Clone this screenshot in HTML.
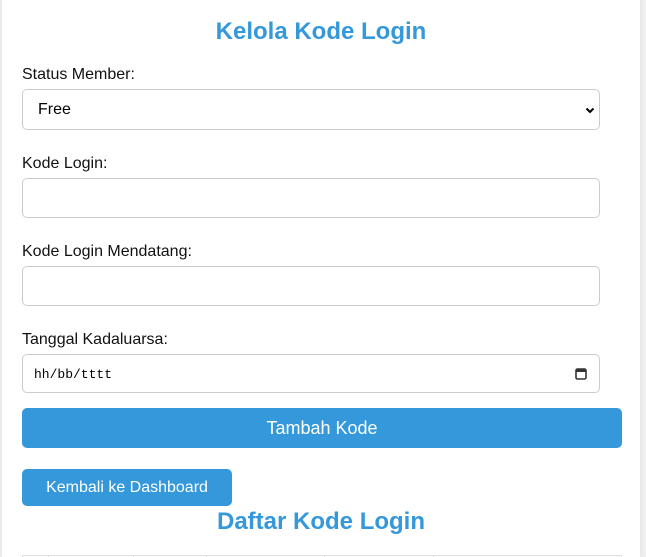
<!DOCTYPE html>
<html style="height:557px;overflow:hidden"><head><style>
body{margin:0;background:#f0f0f0;font-family:"Liberation Sans",Arial,sans-serif;width:646px;height:557px;overflow:hidden;position:relative}
.card{position:absolute;left:2px;top:-10px;width:638px;height:567px;background:#fff;border-radius:10px 10px 0 0;box-shadow:0 0 6px rgba(0,0,0,.08)}
.a{position:absolute}
h2{position:absolute;left:0;width:642px;text-align:center;margin:0;color:#3498db;font-size:24px;font-weight:bold}
.lbl{position:absolute;left:22px;font-size:16px;color:#111}
.in{position:absolute;left:22px;width:576px;border:1px solid #ccc;border-radius:5px;background:#fff}
.btn{position:absolute;background:#3498db;color:#fff;border-radius:5px;text-align:center;font-size:18px}
.v{position:absolute;top:555px;width:1px;height:2px;background:#ddd}
</style></head><body>
<div class="card"></div>
<h2 style="top:18px">Kelola Kode Login</h2>
<div class="lbl" style="top:66px">Status Member:</div>
<div class="in" style="top:89px;height:39px"><span class="a" style="left:15px;top:11px;font-size:16px">Free</span>
<svg class="a" style="left:562px;top:15px" width="10" height="10" viewBox="0 0 10 10"><path d="M1.5 3.5L5 7L8.5 3.5" stroke="#000" stroke-width="2" fill="none"/></svg></div>
<div class="lbl" style="top:155px">Kode Login:</div>
<div class="in" style="top:178px;height:38px"></div>
<div class="lbl" style="top:243px">Kode Login Mendatang:</div>
<div class="in" style="top:266px;height:38px"></div>
<div class="lbl" style="top:331px">Tanggal Kadaluarsa:</div>
<div class="in" style="top:354px;height:37px"><span class="a" style="left:11px;top:12px;font-family:'Liberation Mono',monospace;font-size:13px">hh/bb/tttt</span>
<svg class="a" style="left:552px;top:12px" width="12" height="13" viewBox="0 0 12 13"><rect x="1" y="2" width="10" height="10" rx="1.5" fill="none" stroke="#333" stroke-width="1.6"/><rect x="1" y="2" width="10" height="3" fill="#333"/></svg></div>
<div class="btn" style="left:22px;top:408px;width:600px;height:40px;line-height:40px">Tambah Kode</div>
<div class="btn" style="left:22px;top:469px;width:210px;height:37px;line-height:37px;font-size:16px">Kembali ke Dashboard</div>
<h2 style="top:508px">Daftar Kode Login</h2>
<div class="a" style="left:22px;top:555px;width:600px;height:2px;border-top:1px solid #ddd"></div>
<div class="v" style="left:22px"></div><div class="v" style="left:48px"></div><div class="v" style="left:133px"></div><div class="v" style="left:206px"></div><div class="v" style="left:324px"></div><div class="v" style="left:433px"></div><div class="v" style="left:621px"></div>
</body></html>
